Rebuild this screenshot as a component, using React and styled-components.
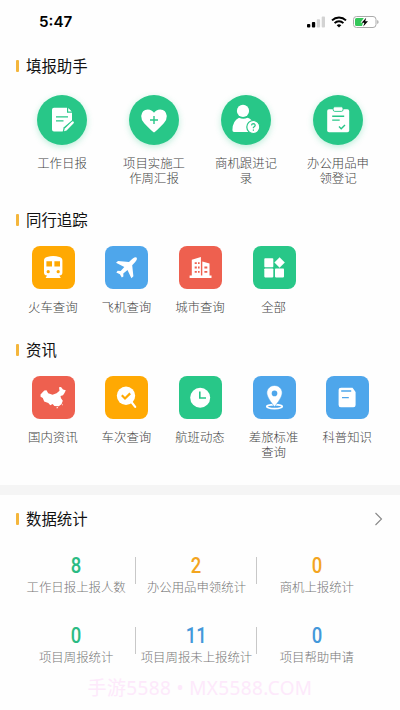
import styled, { createGlobalStyle } from "styled-components";

const GlobalStyle = createGlobalStyle`
  * {
    box-sizing: border-box;
  }

  body {
    margin: 0;
    background-color: #fefefe;
    font-family: "Noto Sans CJK SC", sans-serif;
  }
`;

const green = "#28c788";
const orange = "#ffa903";
const blue = "#4ea6eb";
const red = "#ee604f";

// --- 页面容器 ---
const Wrapper = styled.div`
  width: 400px;
  height: 710px;
  overflow: hidden;
  display: flex;
  flex-direction: column;
`;

// --- 状态栏 ---
const StatusBar = styled.header`
  height: 44px;
  flex-shrink: 0;
  padding: 0 21px 0 39px;
  display: flex;
  align-items: center;
  justify-content: space-between;
`;

const Time = styled.span`
  font-family: Inter, sans-serif;
  font-size: 15.2px;
  font-weight: 600;
  line-height: 20px;
  color: #000;
`;

const StatusIcons = styled.div`
  display: flex;
  align-items: center;
  gap: 6px;
`;

// --- 区块 ---
const Section = styled.section`
  height: ${({ $height }) => $height}px;
  flex-shrink: 0;
  padding: 0 16px;
`;

const SectionHead = styled.div`
  height: 44px;
  display: flex;
  align-items: center;
`;

const Mark = styled.i`
  width: 3px;
  height: 12px;
  margin-right: 7px;
  border-radius: 1px;
  background-color: #f4b63c;
`;

const Title = styled.h2`
  margin: 0;
  padding-bottom: 2px;
  flex: 1;
  font-size: 15.4px;
  font-weight: 400;
  line-height: 22px;
  color: #111;
`;

const Menu = styled.div`
  display: grid;
  grid-template-columns: repeat(${({ $columns }) => $columns}, 1fr);
  padding-top: ${({ $top }) => $top}px;
`;

const MenuItem = styled.div`
  display: flex;
  flex-direction: column;
  align-items: center;
`;

const Circle = styled.div`
  width: 50px;
  height: 50px;
  border-radius: 50%;
  background-color: ${green};
  box-shadow: 0 2px 6px rgba(40, 199, 136, 0.3);
`;

const Tile = styled.div`
  width: 43px;
  height: 43px;
  margin-left: 1px;
  border-radius: 8px;
  background-color: ${({ $color }) => $color};
`;

const Label = styled.span`
  width: ${({ $width }) => $width}px;
  margin-top: 11px;
  font-size: 12.4px;
  font-weight: 300;
  line-height: 14.5px;
  text-align: center;
  color: #444;
`;

const Band = styled.div`
  height: 10px;
  flex-shrink: 0;
  background-color: #f5f5f5;
`;

// --- 数据统计 ---
const Stats = styled.section`
  height: 181px;
  flex-shrink: 0;
  padding: 2px 16px 0;
`;

const StatRow = styled.div`
  width: 361px;
  height: 70px;
  display: grid;
  grid-template-columns: repeat(3, 1fr);
`;

const Stat = styled.div`
  position: relative;
  padding-top: 6px;
  display: flex;
  flex-direction: column;
  align-items: center;

  &:not(:last-child)::after {
    content: "";
    position: absolute;
    top: 16px;
    right: 0;
    width: 1px;
    height: 27px;
    background-color: #c8c8c8;
  }
`;

const StatValue = styled.b`
  font-family: Roboto, sans-serif;
  font-size: 21.5px;
  font-weight: 500;
  line-height: 38px;
  height: 33px;
  transform: scaleX(0.86);
  color: ${({ $color }) => $color};
`;

const StatLabel = styled.span`
  font-size: 12.4px;
  font-weight: 300;
  line-height: 14px;
  white-space: nowrap;
  color: #777;
`;

const Watermark = styled.footer`
  font-family: "Noto Sans", "Noto Sans CJK SC", sans-serif;
  font-size: 19px;
  letter-spacing: 0.35px;
  line-height: 24px;
  text-align: center;
  white-space: nowrap;
  color: #fde9fb;
`;

// --- 图标 ---
const Signal = () => (
  <svg width="18" height="12" viewBox="0 0 18 12">
    <rect x="0" y="8" width="3.3" height="3.5" rx="0.9" fill="#000" />
    <rect x="4.9" y="6" width="3.3" height="5.5" rx="0.9" fill="#000" />
    <rect x="9.8" y="3.2" width="3.3" height="8.3" rx="0.9" fill="#d3d3d3" />
    <rect x="14.7" y="0.5" width="3.3" height="11" rx="0.9" fill="#d3d3d3" />
  </svg>
);

const Wifi = () => (
  <svg width="16" height="12" viewBox="0 0 16 12" fill="none" stroke="#000">
    <path d="M1 4.4A10.1 10.1 0 0 1 15 4.4" strokeWidth="2" />
    <path d="M3.6 7.1A6.3 6.3 0 0 1 12.4 7.1" strokeWidth="2" />
    <path d="M5.7 9.2A3.4 3.4 0 0 1 10.3 9.2L8 11.6Z" fill="#000" stroke="none" />
  </svg>
);

const Battery = () => (
  <svg width="26" height="12" viewBox="0 0 26 12">
    <rect x="0.5" y="0.5" width="22.5" height="11" rx="3" fill="#fff" stroke="#aaa" />
    <path d="M3.5 2H10.8L7.5 6.8H10L9 10H3.5Q2 10 2 8.5V3.5Q2 2 3.5 2Z" fill="#34c759" />
    <path d="M13.2 1.8L8.6 6.7H11.4L10.3 10.4L15 5.3H12.2Z" fill="#000" />
    <path d="M24.2 4V8Q25.6 7.4 25.6 6T24.2 4Z" fill="#aaa" />
  </svg>
);

const CircleIcon = ({ children }) => (
  <svg width="50" height="50" viewBox="0 0 50 50" fill="#fff">
    {children}
  </svg>
);

const TileIcon = ({ children }) => (
  <svg width="43" height="43" viewBox="0 0 43 43" fill="#fff">
    {children}
  </svg>
);

const DailyIcon = () => (
  <CircleIcon>
    <path d="M17 12.8H30V17.7H35V34.6Q35 36.6 33 36.6H17Q15 36.6 15 34.6V14.8Q15 12.8 17 12.8Z" />
    <path d="M31.2 13L34.8 16.6H31.2Z" />
    <path d="M19 21.8H31M19 25.8H26.5" stroke={green} strokeWidth="1.3" />
    <path d="M25.6 37.6L26.6 32.6L35.6 24.8L39 27V38H25.6Z" fill={green} />
    <path d="M27 36.3L27.8 33.4L34.8 26.7Q36.2 25.8 36.9 27.3Q37 28 36.4 28.6L29.6 35.4Z" />
  </CircleIcon>
);

const HeartIcon = () => (
  <CircleIcon>
    <path d="M25 37.5Q23.8 37.2 15.2 28.2Q12 24.6 12.2 21Q12.8 14.8 18.8 14.4Q23 14.5 25 17.8Q27 14.5 31.2 14.4Q37.2 14.8 37.8 21Q38 24.6 34.8 28.2Q26.2 37.2 25 37.5Z" />
    <path d="M25 21V29M21 25H29" stroke={green} strokeWidth="1.4" />
  </CircleIcon>
);

const PersonIcon = () => (
  <CircleIcon>
    <circle cx="22" cy="15.9" r="6.1" />
    <path d="M18 22.8Q22.3 24.8 26.5 22.8Q30.8 24 32 28V37H13Q11.4 37 11.4 35Q11.5 26 18 22.8Z" />
    <circle cx="32.3" cy="32" r="6.5" stroke={green} strokeWidth="1.2" />
    <path
      d="M30.5 30.4Q30.7 28.7 32.4 28.7Q34.2 28.8 34.2 30.3Q34 31.3 32.4 32.4V33.3M32.4 34.4V35.7"
      fill="none"
      stroke={green}
      strokeWidth="1.2"
    />
  </CircleIcon>
);

const ClipboardIcon = () => (
  <CircleIcon>
    <rect x="14.2" y="14.2" width="22" height="23" rx="1.8" />
    <rect x="20.2" y="11.8" width="9.8" height="4.6" rx="1.6" stroke={green} strokeWidth="0.9" />
    <path
      d="M19.2 21.3H31.2M19.2 25.1H26.7M26 31.6L28.2 33.8L32 29.9"
      fill="none"
      stroke={green}
      strokeWidth="1.4"
    />
  </CircleIcon>
);

const TrainIcon = () => (
  <TileIcon>
    <path d="M15 11Q21.2 9.2 27.4 11Q30.4 11.8 30.4 14.5V26.5Q30.4 29.4 27.4 29.6L28.8 32H13.6L15 29.6Q12 29.4 12 26.5V14.5Q12 11.8 15 11Z" />
    <path d="M14.4 15.2H20V20.6H14.4ZM22.4 15.2H28V20.6H22.4Z" fill={orange} />
    <circle cx="16.2" cy="25.7" r="1.6" fill={orange} />
    <circle cx="26.2" cy="25.7" r="1.6" fill={orange} />
  </TileIcon>
);

const PlaneIcon = () => (
  <TileIcon>
    <path d="M30.7 11.2Q32.5 11.5 31.6 14Q30.7 16 27.2 19.2L28.4 30.3L26.4 32.2L22.5 23.9L18.3 27.6L18.4 30.4L16.8 31.6L14.9 28.3L11.3 26.4L12.7 24.8L15.7 25L19.3 20.9L11 16.7L13 14.9L24 16.1Q28.3 11.2 30.7 11.2Z" />
  </TileIcon>
);

const CityIcon = () => (
  <TileIcon>
    <path d="M12.8 13.8L21.9 11V29.6H23.3V15.6L30.5 17.5V29.6H32.5V32H10.6V29.6H12.8Z" />
    <path
      d="M15.7 17.2H17.8M19 17.2H20.6M15.7 21.5H17.8M19 21.5H20.6M15.7 25.8H17.8M19 25.8H20.6M25.4 21.5H28.3M25.4 25.8H28.3"
      stroke={red}
      strokeWidth="1.8"
    />
  </TileIcon>
);

const AllIcon = () => (
  <TileIcon>
    <rect x="11.3" y="12.3" width="9" height="9" rx="0.8" />
    <rect x="11.3" y="22.4" width="9" height="9" rx="0.8" />
    <rect x="22" y="22.4" width="9" height="9" rx="0.8" />
    <path d="M26.6 11.3L31.8 16.5L26.6 21.7L21.4 16.5Z" />
  </TileIcon>
);

const ChinaIcon = () => (
  <TileIcon>
    <path d="M8.5 18.5L12.3 14.4L14.5 14.3L16.2 17.3L20.5 18.7L24.6 17.2L27.5 14.7L27 11.3L29 10.9L31 13.5L33.8 14.3L32.5 17L31 19.2L28.5 20.1L29 22.3L30.8 24.7L29.5 28.2L26.7 30.3L22.4 30L20.6 28L18.3 29.2L16.3 26.9L12.2 25.5L10.8 21.9L8.6 20.8Z" />
    <path d="M25 31L26.2 31.3L25.2 32.6L24.3 32ZM30.3 27.8L31 28.2L30.3 29.9Z" />
  </TileIcon>
);

const SearchIcon = () => (
  <TileIcon>
    <circle cx="21" cy="19.8" r="9.2" />
    <path d="M26.4 26L30.2 30.9" stroke="#fff" strokeWidth="2.2" strokeLinecap="round" />
    <path d="M16.8 19.3L20 22.5L25.2 17.4" fill="none" stroke={orange} strokeWidth="2.2" />
  </TileIcon>
);

const ClockIcon = () => (
  <TileIcon>
    <circle cx="21.2" cy="21.7" r="10" />
    <path d="M20.8 15.5V22H27" fill="none" stroke={green} strokeWidth="1.6" />
  </TileIcon>
);

const PinIcon = () => (
  <TileIcon>
    <ellipse cx="21.5" cy="30.6" rx="7.8" ry="2" fill="none" stroke="#fff" strokeWidth="1.6" />
    <path
      d="M21.5 9.5C17.2 9.5 13.8 12.7 13.8 17C13.8 22 21.5 30.6 21.5 30.6S29.2 22 29.2 17C29.2 12.7 25.8 9.5 21.5 9.5Z"
      stroke={blue}
      strokeWidth="0.6"
    />
    <circle cx="21.5" cy="17.4" r="2.8" fill={blue} />
  </TileIcon>
);

const BookIcon = () => (
  <TileIcon>
    <path d="M15 11.8H26.5L29.6 16V29Q29.6 31.2 27.4 31.2H14.8Q12.6 31.2 12.6 29V14Q12.6 11.8 15 11.8Z" />
    <path d="M15.2 15H25.2M16 21.6H22.8" stroke={blue} strokeWidth="1.3" />
  </TileIcon>
);

const Arrow = () => (
  <svg width="10" height="14" viewBox="0 0 10 14" fill="none" stroke="#888" strokeWidth="1.1">
    <path d="M1.5 1L7.5 7L1.5 13" />
  </svg>
);

const reports = [
  { label: "工作日报", Icon: DailyIcon },
  { label: "项目实施工作周汇报", Icon: HeartIcon },
  { label: "商机跟进记录", Icon: PersonIcon },
  { label: "办公用品申领登记", Icon: ClipboardIcon },
];

const trips = [
  { label: "火车查询", color: orange, Icon: TrainIcon },
  { label: "飞机查询", color: blue, Icon: PlaneIcon },
  { label: "城市查询", color: red, Icon: CityIcon },
  { label: "全部", color: green, Icon: AllIcon },
];

const news = [
  { label: "国内资讯", color: red, Icon: ChinaIcon },
  { label: "车次查询", color: orange, Icon: SearchIcon },
  { label: "航班动态", color: green, Icon: ClockIcon },
  { label: "差旅标准查询", color: blue, Icon: PinIcon },
  { label: "科普知识", color: blue, Icon: BookIcon },
];

const stats = [
  [
    { value: 8, label: "工作日报上报人数", color: "#2bbb83" },
    { value: 2, label: "办公用品申领统计", color: "#f3a51f" },
    { value: 0, label: "商机上报统计", color: "#f3a51f" },
  ],
  [
    { value: 0, label: "项目周报统计", color: "#2bbb83" },
    { value: 11, label: "项目周报未上报统计", color: "#4398da" },
    { value: 0, label: "项目帮助申请", color: "#4398da" },
  ],
];

const Head = ({ title, children }) => (
  <SectionHead>
    <Mark />
    <Title>{title}</Title>
    {children}
  </SectionHead>
);

const TileMenu = ({ items }) => (
  <Menu $columns={5} $top={4}>
    {items.map(({ label, color, Icon }) => (
      <MenuItem key={label}>
        <Tile $color={color}>
          <Icon />
        </Tile>
        <Label $width={52}>{label}</Label>
      </MenuItem>
    ))}
  </Menu>
);

export default function App() {
  return (
    <>
      <GlobalStyle />
      <Wrapper>
        <StatusBar>
          <Time>5:47</Time>
          <StatusIcons>
            <Signal />
            <Wifi />
            <Battery />
          </StatusIcons>
        </StatusBar>
        <Section $height={154}>
          <Head title="填报助手" />
          <Menu $columns={4} $top={7}>
            {reports.map(({ label, Icon }) => (
              <MenuItem key={label}>
                <Circle>
                  <Icon />
                </Circle>
                <Label $width={64}>{label}</Label>
              </MenuItem>
            ))}
          </Menu>
        </Section>
        <Section $height={130}>
          <Head title="同行追踪" />
          <TileMenu items={trips} />
        </Section>
        <Section $height={157}>
          <Head title="资讯" />
          <TileMenu items={news} />
        </Section>
        <Band />
        <Stats>
          <Head title="数据统计">
            <Arrow />
          </Head>
          {stats.map((row, i) => (
            <StatRow key={i}>
              {row.map(({ value, label, color }) => (
                <Stat key={label}>
                  <StatValue $color={color}>{value}</StatValue>
                  <StatLabel>{label}</StatLabel>
                </Stat>
              ))}
            </StatRow>
          ))}
        </Stats>
        <Watermark>手游5588 • MX5588.COM</Watermark>
      </Wrapper>
    </>
  );
}
